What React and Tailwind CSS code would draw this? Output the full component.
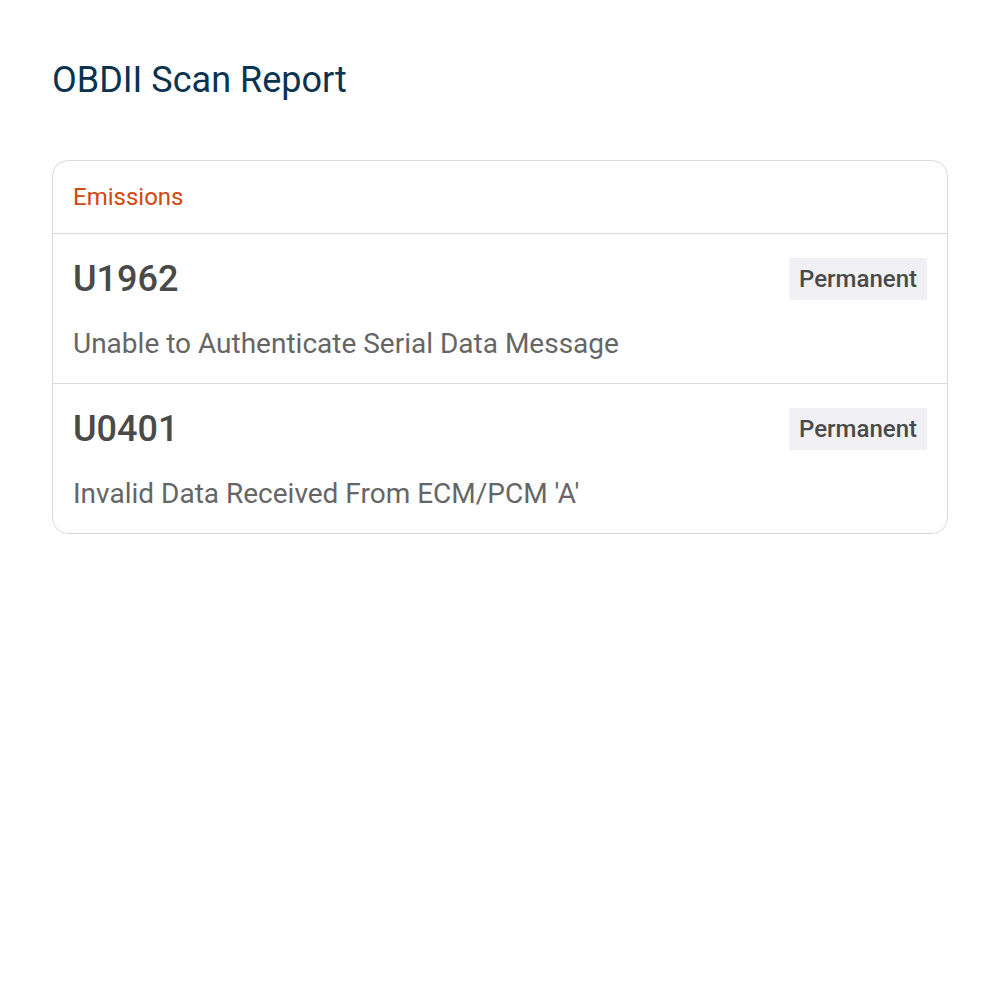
const codes = [
  { code: 'U1962', status: 'Permanent', desc: 'Unable to Authenticate Serial Data Message' },
  { code: 'U0401', status: 'Permanent', desc: "Invalid Data Received From ECM/PCM 'A'" },
];

export default function App() {
  return (
    <div className="min-h-screen bg-white px-[52px] pt-[60px] font-['Roboto',sans-serif]">
      <h1 className="text-[36px] leading-[40px] text-[#0a3350]">OBDII Scan Report</h1>

      <div className="mt-[60px] rounded-2xl border border-[#dadada] overflow-hidden">
        <div className="h-[73px] flex items-center px-5 border-b border-[#dadada]">
          <span className="text-[24px] text-[#d2480f]">Emissions</span>
        </div>
        {codes.map((c, i) => (
          <div key={c.code} className={`px-5 pt-6 pb-5 ${i > 0 ? 'border-t border-[#dadada]' : ''}`}>
            <div className="flex items-center justify-between h-[42px]">
              <span className="text-[36px] font-medium text-[#4a4a4a]">{c.code}</span>
              <span className="h-[42px] px-[10px] flex items-center bg-[#f1f1f5] text-[24px] font-medium text-[#4a4a4a]">
                {c.status}
              </span>
            </div>
            <p className="mt-6 text-[28px] leading-[39px] text-[#666666]">{c.desc}</p>
          </div>
        ))}
      </div>
    </div>
  );
}
